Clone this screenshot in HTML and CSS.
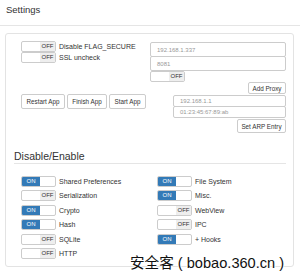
FILE: index.html
```html
<!DOCTYPE html>
<html>
<head>
<meta charset="utf-8">
<link rel="stylesheet" href="styles.css">
</head>
<body>
<div class="modal">
  <div class="header">Settings</div>
  <div class="panel">
    <div class="row row1">
      <div class="col-left">
        <div class="item"><span class="sw off"><span class="sw-l"></span><span class="sw-r">OFF</span></span><span class="lbl">Disable FLAG_SECURE</span></div>
        <div class="item"><span class="sw off"><span class="sw-l"></span><span class="sw-r">OFF</span></span><span class="lbl">SSL uncheck</span></div>
      </div>
      <div class="col-right">
        <div class="inp big">192.168.1.337</div>
        <div class="inp big second">8081</div>
        <div class="proxy-sw"><span class="sw off"><span class="sw-l"></span><span class="sw-r">OFF</span></span></div>
        <div class="btn-line"><span class="btn proxy">Add Proxy</span></div>
      </div>
    </div>
    <div class="row row2">
      <div class="col-left buttons">
        <span class="btn">Restart App</span>
        <span class="btn">Finish App</span>
        <span class="btn">Start App</span>
      </div>
      <div class="col-right arp">
        <div class="inp small">192.168.1.1</div>
        <div class="inp small second">01:23:45:67:89:ab</div>
        <div class="btn-line"><span class="btn arp-btn">Set ARP Entry</span></div>
      </div>
    </div>
    <h2 class="section">Disable/Enable</h2>
    <div class="grid">
      <div class="gcol">
        <div class="item"><span class="sw on"><span class="sw-l">ON</span><span class="sw-r"></span></span><span class="lbl">Shared Preferences</span></div>
        <div class="item"><span class="sw off"><span class="sw-l"></span><span class="sw-r">OFF</span></span><span class="lbl">Serialization</span></div>
        <div class="item"><span class="sw on"><span class="sw-l">ON</span><span class="sw-r"></span></span><span class="lbl">Crypto</span></div>
        <div class="item"><span class="sw on"><span class="sw-l">ON</span><span class="sw-r"></span></span><span class="lbl">Hash</span></div>
        <div class="item"><span class="sw off"><span class="sw-l"></span><span class="sw-r">OFF</span></span><span class="lbl">SQLite</span></div>
        <div class="item"><span class="sw off"><span class="sw-l"></span><span class="sw-r">OFF</span></span><span class="lbl">HTTP</span></div>
      </div>
      <div class="gcol">
        <div class="item"><span class="sw on"><span class="sw-l">ON</span><span class="sw-r"></span></span><span class="lbl">File System</span></div>
        <div class="item"><span class="sw on"><span class="sw-l">ON</span><span class="sw-r"></span></span><span class="lbl">Misc.</span></div>
        <div class="item"><span class="sw off"><span class="sw-l"></span><span class="sw-r">OFF</span></span><span class="lbl">WebView</span></div>
        <div class="item"><span class="sw off"><span class="sw-l"></span><span class="sw-r">OFF</span></span><span class="lbl">IPC</span></div>
        <div class="item"><span class="sw on"><span class="sw-l">ON</span><span class="sw-r"></span></span><span class="lbl">+ Hooks</span></div>
      </div>
    </div>
  </div>
  <div class="watermark">安全客 ( bobao.360.cn )</div>
</div>
</body>
</html>
```
FILE: styles.css
```css
* { box-sizing: border-box; }
html, body { margin: 0; padding: 0; background: #fff; }
body {
  font-family: "Liberation Sans", Arial, sans-serif;
  color: #333;
  width: 300px;
  height: 275px;
  overflow: hidden;
}
.modal { position: relative; width: 300px; height: 275px; }
.header {
  height: 26px;
  padding: 4px 0 0 6px;
  font-size: 9.5px;
  line-height: 11px;
  border-bottom: 1px solid #e5e5e5;
}
.panel {
  margin: 7px 0 0 5px;
  width: 289px;
  height: 234px;
  border: 1px solid #e3e3e3;
  border-radius: 3px;
  padding: 7px 6px 8px 8px;
}
.row { display: flex; padding-left: 7px; }
.row1 { height: 53px; }
.col-left { width: 129px; flex: none; }
.col-right { width: 136px; flex: none; }
.item {
  display: flex;
  align-items: center;
  height: 11px;
}
.lbl { font-size: 7px; margin-left: 3px; white-space: nowrap; line-height: 11px; }
.sw {
  display: inline-flex;
  flex: none;
  width: 35px;
  height: 11px;
  border: 1px solid #ccc;
  border-radius: 2px;
  overflow: hidden;
  font-size: 6px;
  line-height: 9px;
  background: #fff;
}
.sw span { flex: 1; display: flex; align-items: center; justify-content: center; }
.sw .sw-l { flex: 0 0 18px; }
.sw.off .sw-r { background: #eee; color: #333; }
.sw.on .sw-l { background: #337ab7; color: #fff; }
.inp {
  border: 1px solid #ccc;
  border-radius: 2px;
  font-size: 6px;
  color: #999;
  padding-left: 6px;
  display: flex;
  align-items: center;
}
.inp.big { height: 15px; margin-top: 1px; }
.inp.big.second { margin-top: -1px; }
.inp.small { height: 12px; }
.inp.small.second { margin-top: -1px; }
.proxy-sw { height: 11px; display: flex; margin-top: 0; }
.btn-line { display: flex; justify-content: flex-end; }
.btn {
  display: inline-flex;
  align-items: center;
  justify-content: center;
  border: 1px solid #ccc;
  border-radius: 2px;
  background: #fff;
  font-size: 6.3px;
  color: #333;
  white-space: nowrap;
  height: 15px;
}
.btn.proxy { width: 38px; height: 12px; margin-top: 0; }
.row2 { height: 38px; }
.buttons { display: flex; gap: 2px; align-items: flex-start; }
.buttons .btn:nth-child(1) { width: 44px; }
.buttons .btn:nth-child(2) { width: 40px; }
.buttons .btn:nth-child(3) { width: 37px; }
.arp { padding-left: 23px; margin-top: 1px; }
.btn.arp-btn { width: 49px; height: 14px; margin-top: 1px; }
.section {
  margin: 18px 0 0 0;
  font-size: 10.5px;
  font-weight: normal;
  line-height: 12px;
  padding-bottom: 1px;
  border-bottom: 1px solid #e5e5e5;
  width: 272px;
}
.grid {
  display: grid;
  grid-template-columns: 136px 136px;
  padding-left: 7px;
  margin-top: 12px;
}
.gcol { display: flex; flex-direction: column; gap: 3.4px; }
.watermark {
  position: absolute;
  left: 130px;
  top: 251px;
  font-family: "Liberation Sans", "Noto Sans CJK SC", sans-serif;
  font-size: 14.6px;
  color: #111;
  white-space: nowrap;
  text-shadow: 1px 0 0 #fff, -1px 0 0 #fff, 0 1px 0 #fff, 0 -1px 0 #fff;
}
```
